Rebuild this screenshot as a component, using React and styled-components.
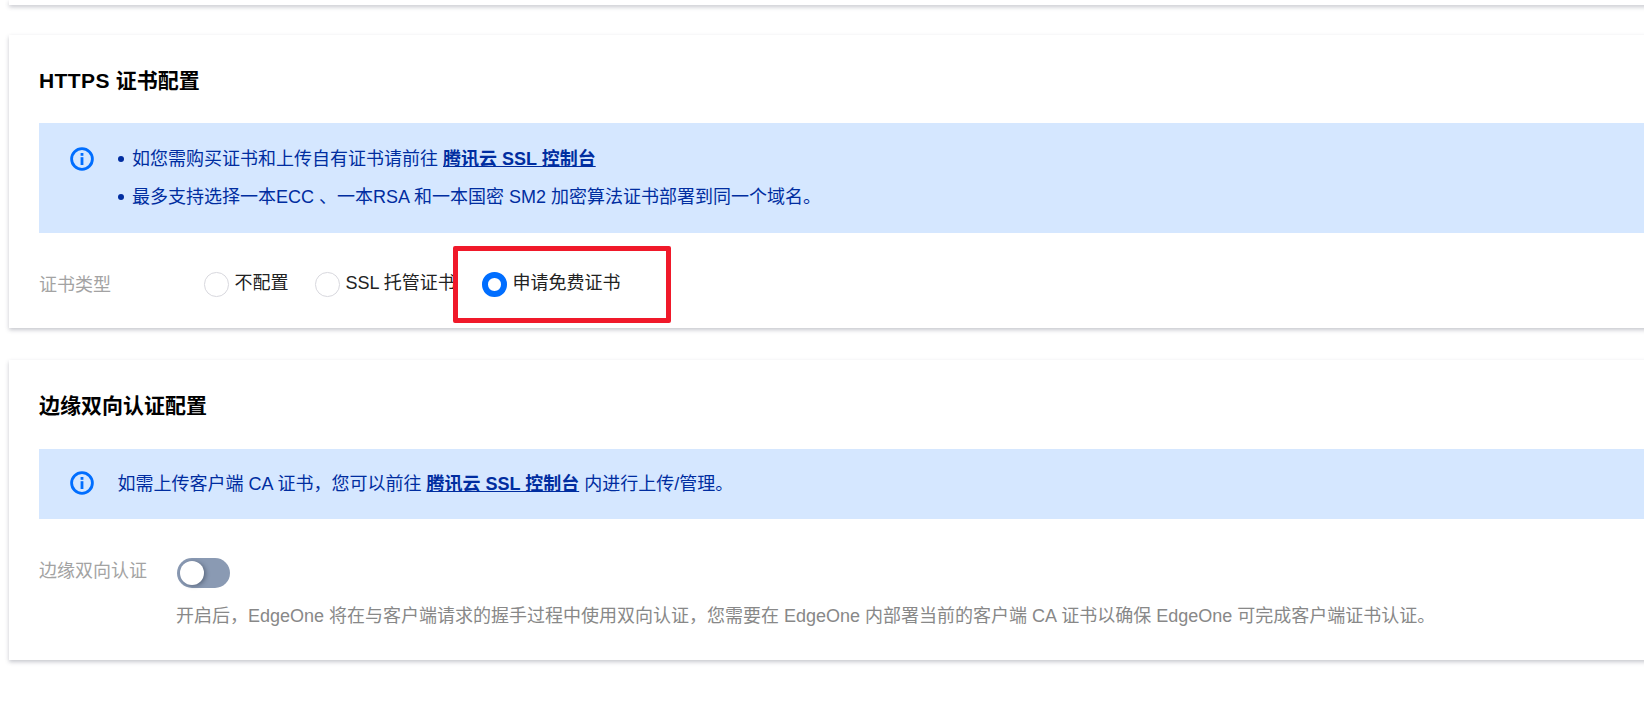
import React from 'react';
import styled, { createGlobalStyle } from 'styled-components';

const GlobalStyle = createGlobalStyle`
    html, body {
        margin: 0;
        padding: 0;
        background: #fff;
        overflow: hidden;
    }
    body {
        font-family: "Liberation Sans", "Noto Sans CJK SC", sans-serif;
        font-size: 18px;
    }
`;

const Page = styled.div`
    position: relative;
    width: 1644px;
    height: 719px;
    overflow: hidden;
    padding-left: 9px;
    box-sizing: border-box;
`;

const Card = styled.section`
    width: 1700px;
    box-sizing: border-box;
    background: #fff;
    box-shadow: 0 2px 4px rgba(54, 58, 80, 0.28);
    padding: ${(props) => props.$padding || '0'};
    height: ${(props) => props.$height};
    margin-bottom: ${(props) => props.$gap || '30px'};
`;

const Title = styled.h2`
    margin: 0 0 ${(props) => props.$gap};
    font-size: 21px;
    line-height: 28px;
    font-weight: 700;
    color: #000;
`;

const TitleLatin = styled.span`
    letter-spacing: 0.4px;
`;

const Alert = styled.div`
    display: flex;
    background: #d5e7ff;
    color: #002da0;
    height: ${(props) => props.$height};
    padding: ${(props) => props.$padding};
    box-sizing: border-box;
    margin-bottom: ${(props) => props.$gap};
`;

const InfoIcon = styled.svg`
    flex: none;
    width: 24px;
    height: 24px;
    margin: ${(props) => props.$top || '0'} 23.5px 0 0;
`;

const AlertBody = styled.div`
    line-height: 26px;
    white-space: nowrap;
`;

const AlertItem = styled.div`
    position: relative;
    padding-left: 14.5px;
    margin-bottom: 12px;

    &::before {
        content: '';
        position: absolute;
        left: 0;
        top: 10px;
        width: 6px;
        height: 6px;
        border-radius: 50%;
        background: #002da0;
    }
`;

const AlertLink = styled.a`
    font-weight: 700;
    color: #002da0;
    text-decoration: underline;
`;

const FormRow = styled.div`
    display: flex;
    align-items: ${(props) => props.$align || 'center'};
`;

const Label = styled.div`
    width: ${(props) => props.$width};
    margin-top: ${(props) => props.$top || '0'};
    flex: none;
    color: #a3a3a3;
    line-height: 26px;
`;

const RadioGroup = styled.div`
    display: flex;
    align-items: center;
`;

const RadioItem = styled.label`
    display: flex;
    align-items: center;
    width: ${(props) => props.$width};
    color: #222;
    line-height: 26px;
    white-space: nowrap;
`;

const RadioDot = styled.span`
    flex: none;
    width: 24.5px;
    height: 24.5px;
    box-sizing: border-box;
    border-radius: 50%;
    margin: 2px 6px 0 0;
    background: #fff;
    border: ${(props) => (props.$checked ? '6.5px solid #006eff' : '1px solid #d8d8de')};
`;

const Toggle = styled.span`
    display: block;
    position: relative;
    width: 53px;
    height: 30px;
    border-radius: 15px;
    background: #8a9ab3;

    &::after {
        content: '';
        position: absolute;
        left: 3px;
        top: 3px;
        width: 24px;
        height: 24px;
        border-radius: 50%;
        background: #fff;
        box-shadow: 2px 1px 4px rgba(40, 50, 70, 0.45);
    }
`;

const Help = styled.div`
    margin: 15px 0 0 -1px;
    color: #888;
    line-height: 26px;
    white-space: nowrap;
`;

const Highlight = styled.div`
    position: absolute;
    left: 453px;
    top: 246px;
    width: 218px;
    height: 77px;
    box-sizing: border-box;
    border: 5px solid #f0192a;
    border-radius: 2px;
`;

const Info = ({ top }) => (
    <InfoIcon $top={top} viewBox="0 0 24 24">
        <circle cx="12" cy="12" r="10.4" fill="none" stroke="#006eff" strokeWidth="2.8" />
        <rect x="10.6" y="6" width="2.8" height="2.8" fill="#006eff" />
        <rect x="10.6" y="10.2" width="2.8" height="7.8" fill="#006eff" />
    </InfoIcon>
);

const App = () => {
    return (
        <Page>
            <GlobalStyle />
            <Card $height="5px" />

            <Card $height="293px" $padding="32px 0 0 30px" $gap="32px">
                <Title $gap="28px"><TitleLatin>HTTPS</TitleLatin> 证书配置</Title>
                <Alert $height="110px" $padding="23px 0 0 31px" $gap="37px">
                    <Info top="1px" />
                    <AlertBody>
                        <AlertItem>
                            如您需购买证书和上传自有证书请前往 <AlertLink>腾讯云 SSL 控制台</AlertLink>
                        </AlertItem>
                        <AlertItem>最多支持选择一本ECC 、一本RSA 和一本国密 SM2 加密算法证书部署到同一个域名。</AlertItem>
                    </AlertBody>
                </Alert>
                <FormRow $align="flex-start">
                    <Label $width="165px" $top="2px">证书类型</Label>
                    <RadioGroup>
                        <RadioItem $width="111px"><RadioDot />不配置</RadioItem>
                        <RadioItem $width="167px"><RadioDot />SSL 托管证书</RadioItem>
                        <RadioItem><RadioDot $checked />申请免费证书</RadioItem>
                    </RadioGroup>
                </FormRow>
            </Card>

            <Card $height="300px" $padding="32px 0 0 30px">
                <Title $gap="29px">边缘双向认证配置</Title>
                <Alert $height="70px" $padding="22px 0 0 31px" $gap="39px">
                    <Info />
                    <AlertBody>
                        如需上传客户端 CA 证书，您可以前往 <AlertLink>腾讯云 SSL 控制台</AlertLink> 内进行上传/管理。
                    </AlertBody>
                </Alert>
                <FormRow $align="flex-start">
                    <Label $width="138px">边缘双向认证</Label>
                    <Toggle />
                </FormRow>
                <FormRow>
                    <Label $width="138px" />
                    <Help>开启后，EdgeOne 将在与客户端请求的握手过程中使用双向认证，您需要在 EdgeOne 内部署当前的客户端 CA 证书以确保 EdgeOne 可完成客户端证书认证。</Help>
                </FormRow>
            </Card>

            <Highlight />
        </Page>
    );
};

export default App;
